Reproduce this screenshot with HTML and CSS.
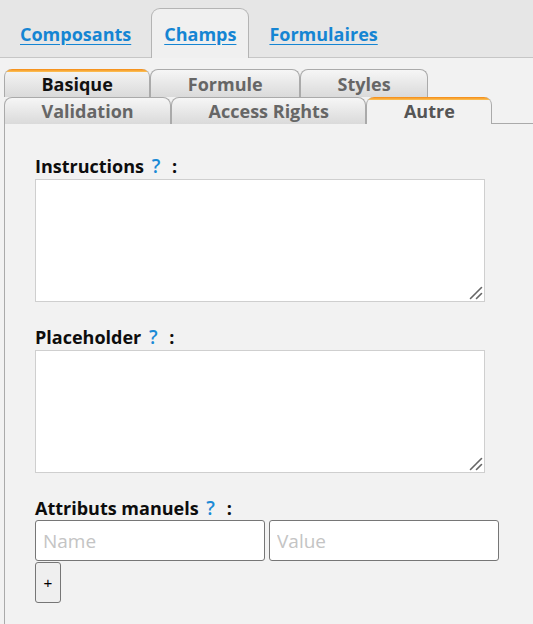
FILE: index.html
```html
<!DOCTYPE html>
<html lang="fr">
<head>
<meta charset="utf-8">
<title>Champs</title>
<link rel="stylesheet" href="styles.css">
</head>
<body>
<nav class="topbar">
  <a class="top-item" href="#">Composants</a>
  <a class="top-item active" href="#">Champs</a>
  <a class="top-item" href="#">Formulaires</a>
</nav>
<div class="subtabs">
  <div class="tab-row">
    <span class="tab hl dark">Basique</span>
    <span class="tab">Formule</span>
    <span class="tab">Styles</span>
  </div>
  <div class="tab-row">
    <span class="tab">Validation</span>
    <span class="tab">Access Rights</span>
    <span class="tab hl current">Autre</span>
  </div>
</div>
<section class="panel">
  <label class="field-label">Instructions <span class="help">?</span> :</label>
  <div class="area-wrap">
    <textarea class="area"></textarea>
    <svg class="grip" width="14" height="14" viewBox="0 0 14 14"><path d="M1.5 12.5 L12.5 1.5 M7.5 12.5 L12.5 7.5" stroke="#666" stroke-width="1.6" stroke-linecap="round" fill="none"/></svg>
  </div>
  <label class="field-label">Placeholder <span class="help">?</span> :</label>
  <div class="area-wrap">
    <textarea class="area"></textarea>
    <svg class="grip" width="14" height="14" viewBox="0 0 14 14"><path d="M1.5 12.5 L12.5 1.5 M7.5 12.5 L12.5 7.5" stroke="#666" stroke-width="1.6" stroke-linecap="round" fill="none"/></svg>
  </div>
  <label class="field-label">Attributs manuels <span class="help">?</span> :</label>
  <div class="attr-row">
    <input class="attr" type="text" placeholder="Name">
    <input class="attr" type="text" placeholder="Value">
  </div>
  <button class="add" type="button">+</button>
</section>
</body>
</html>
```
FILE: styles.css
```css
html, body {
  margin: 0;
  padding: 0;
  background: #f2f2f2;
  font-family: "Open Sans", "DejaVu Sans", sans-serif;
}
body {
  height: 624px;
  overflow: hidden;
}
.topbar {
  display: flex;
  align-items: flex-end;
  gap: 7px;
  height: 57px;
  padding-left: 7px;
  background: #e6e6e6;
  border-bottom: 1px solid #c6c6c6;
}
.top-item {
  display: flex;
  align-items: center;
  height: 49px;
  padding: 0 12px;
  font-size: 18px;
  font-weight: 700;
  color: #1585d3;
  text-decoration: underline;
  text-underline-offset: 3px;
  box-sizing: border-box;
  border: 1px solid transparent;
  border-bottom: none;
  margin-bottom: -1px;
}
.top-item.active {
  height: 50px;
  background: #f0f0f0;
  border-color: #b4b4b4;
  border-radius: 9px 9px 0 0;
}
.subtabs {
  margin-top: 11px;
  padding-left: 4px;
}
.tab-row {
  display: flex;
}
.tab {
  display: flex;
  align-items: center;
  justify-content: center;
  height: 28px;
  box-sizing: border-box;
  padding: 0 36.5px;
  font-size: 18px;
  font-weight: 700;
  color: #666;
  border: 1px solid #aaa;
  border-bottom: none;
  border-radius: 8px 8px 0 0;
  background: linear-gradient(#f6f6f6, #dadada);
}
.tab-row + .tab-row .tab {
  height: 27px;
  margin-bottom: -1px;
  position: relative;
}
.tab.hl {
  border-top: none;
  padding-top: 1px;
  background:
    linear-gradient(#f48a14, #fcc35a 3px, transparent 3px),
    linear-gradient(#f6f6f6, #dadada);
}
.tab.dark {
  color: #111;
}
.tab.current {
  color: #555;
  height: 28px;
  background:
    linear-gradient(#f48a14, #fcc35a 3px, #f2f2f2 3px);
}
.panel {
  margin-left: 4px;
  border-left: 1px solid #aaa;
  border-top: 1px solid #aaa;
  padding: 30px 0 40px 30px;
  display: flex;
  flex-direction: column;
  align-items: flex-start;
}
.field-label {
  font-size: 18px;
  font-weight: 700;
  color: #0d0d0d;
  line-height: 24px;
  height: 24px;
}
.help {
  font-weight: 600;
  font-size: 19px;
  color: #1a8ad6;
  margin: 0 7px 0 3px;
}
.area-wrap {
  position: relative;
  width: 450px;
  height: 123px;
  margin: 1px 0 23px;
}
.area {
  display: block;
  width: 100%;
  height: 100%;
  box-sizing: border-box;
  margin: 0;
  border: 1px solid #cfcfcf;
  background: #fff;
  padding: 4px;
  resize: none;
}
.grip {
  position: absolute;
  right: 2px;
  bottom: 2px;
}
.attr-row {
  display: flex;
  gap: 4px;
}
.attr {
  width: 230px;
  height: 41px;
  box-sizing: border-box;
  border: 1px solid #767676;
  border-radius: 3px;
  background: #fff;
  padding: 0 7px;
  font-family: "Open Sans", sans-serif;
  font-size: 19px;
}
.attr::placeholder {
  color: #c4c4c4;
}
.add {
  width: 26px;
  height: 41px;
  margin-top: 1px;
  box-sizing: border-box;
  border: 1px solid #767676;
  border-radius: 3px;
  background: #efefef;
  font-family: "Liberation Sans", sans-serif;
  font-size: 15px;
  color: #000;
  padding: 0;
}
```
